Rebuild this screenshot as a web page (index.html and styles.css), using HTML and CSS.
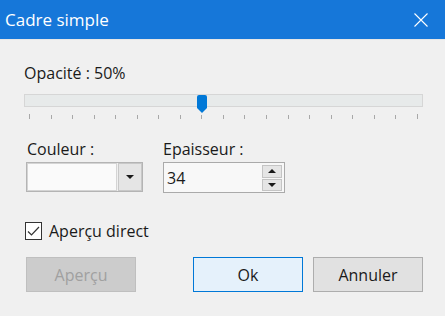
FILE: index.html
```html
<!DOCTYPE html>
<html lang="fr">
<head>
    <meta charset="UTF-8">
    <title>Cadre simple</title>
    <link rel="stylesheet" href="styles.css">
</head>
<body>

    <div class="window">
        <div class="titlebar">
            <span class="title">Cadre simple</span>
            <svg class="close" width="14" height="14" viewBox="0 0 14 14">
                <path d="M0.5 0.5 L13.5 13.5 M13.5 0.5 L0.5 13.5" stroke="#fff" stroke-width="1.1" fill="none"/>
            </svg>
        </div>

        <div class="content">
            <div class="label">Opacité : 50%</div>
            <div class="slider">
                <div class="track"></div>
                <div class="thumb"></div>
                <div class="ticks">
                    <span class="tick long"></span>
                    <span class="tick"></span><span class="tick"></span><span class="tick"></span>
                    <span class="tick"></span><span class="tick"></span><span class="tick"></span>
                    <span class="tick"></span><span class="tick"></span><span class="tick"></span>
                    <span class="tick"></span><span class="tick"></span><span class="tick"></span>
                    <span class="tick"></span><span class="tick"></span><span class="tick"></span>
                    <span class="tick"></span><span class="tick"></span>
                    <span class="tick long"></span>
                </div>
            </div>

            <div class="fields">
                <div class="field">
                    <div class="label">Couleur :</div>
                    <div class="combo">
                        <div class="combo-value"></div>
                        <div class="combo-btn"><span class="arrow-down"></span></div>
                    </div>
                </div>
                <div class="field">
                    <div class="label">Epaisseur :</div>
                    <div class="spin">
                        <div class="spin-value">34</div>
                        <div class="spin-btns">
                            <div class="spin-btn"><span class="arrow-up"></span></div>
                            <div class="spin-btn"><span class="arrow-down"></span></div>
                        </div>
                    </div>
                </div>
            </div>

            <label class="check">
                <span class="box">
                    <svg width="15" height="15" viewBox="0 0 15 15">
                        <path d="M2 7.5 L5.5 11 L13 3" stroke="#333" stroke-width="1.2" fill="none"/>
                    </svg>
                </span>
                Aperçu direct
            </label>

            <div class="buttons">
                <button class="btn disabled">Aperçu</button>
                <div class="spacer"></div>
                <button class="btn default">Ok</button>
                <button class="btn">Annuler</button>
            </div>
        </div>
    </div>

</body>
</html>
```

FILE: styles.css
```css
body {
    margin: 0;
    padding: 0;
    background-color: #f0f0f0;
    font-family: "Open Sans", Arial, sans-serif;
    color: #1a1a1a;
}
.window {
    width: 445px;
    height: 316px;
    background-color: #f0f0f0;
}
.titlebar {
    height: 39px;
    background-color: #1677d9;
    display: flex;
    align-items: center;
    justify-content: space-between;
    padding: 0 17px 0 5px;
    border-bottom: 1px solid #e6e6e6;
}
.title {
    color: #fff;
    font-size: 17px;
    margin-top: -1px;
}
.close {
    display: block;
    margin-top: 1px;
}
.content {
    padding: 23px 22px 0 24px;
}
.label {
    font-size: 16px;
    line-height: 20px;
}
.slider {
    position: relative;
    margin-top: 11px;
    height: 30px;
}
.track {
    background-color: #e7eaea;
    border: 1px solid #d6d6d6;
    box-sizing: border-box;
    height: 13px;
    margin-top: 3px;
}
.thumb {
    position: absolute;
    left: 173px;
    top: 1px;
    width: 10px;
    height: 18px;
    background-color: #0078d7;
    clip-path: polygon(0 0, 100% 0, 100% 72%, 50% 100%, 0 72%);
    border-radius: 2px 2px 0 0;
}
.ticks {
    display: flex;
    justify-content: space-between;
    margin: 7px 5px 0 5px;
    align-items: flex-start;
}
.tick {
    width: 1px;
    height: 4px;
    margin-top: 1px;
    background-color: #a8a8a8;
}
.tick.long {
    height: 5px;
    margin-top: 0;
}
.fields {
    display: flex;
    gap: 20px;
    margin-top: 15px;
}
.field .label {
    padding-left: 3px;
    margin-bottom: 3px;
}
.field:last-child .label {
    padding-left: 0;
}
.combo {
    display: flex;
    width: 117px;
    height: 30px;
    border: 1px solid #b4b4b4;
    box-sizing: border-box;
    margin-left: 2px;
}
.combo-value {
    flex: 1;
    background-color: #fafafa;
    border: 1px solid #d4d4d4;
    margin-right: 1px;
}
.combo-btn {
    width: 22px;
    background-color: #e5e5e5;
    border: 1px solid #c8c8c8;
    display: flex;
    align-items: center;
    justify-content: center;
}
.arrow-down, .arrow-up {
    width: 0;
    height: 0;
    border-left: 4px solid transparent;
    border-right: 4px solid transparent;
}
.arrow-down {
    border-top: 4px solid #1a1a1a;
}
.arrow-up {
    border-bottom: 4px solid #1a1a1a;
}
.spin {
    display: flex;
    width: 122px;
    height: 31px;
    border: 1px solid #aaaaaa;
    box-sizing: border-box;
    background-color: #f8f8f8;
}
.spin-value {
    flex: 1;
    font-size: 16px;
    line-height: 20px;
    padding: 5px 0 0 3px;
}
.spin-btns {
    display: flex;
    flex-direction: column;
    gap: 1px;
    padding: 2px 2px 1px 0;
}
.spin-btn {
    width: 18px;
    flex: 1;
    background-color: #e5e5e5;
    border: 1px solid #c4c4c4;
    display: flex;
    align-items: center;
    justify-content: center;
}
.check {
    display: flex;
    align-items: center;
    gap: 7px;
    margin-top: 28px;
    font-size: 16px;
    line-height: 20px;
    margin-left: 1px;
}
.box {
    width: 17px;
    height: 18px;
    border: 1px solid #333;
    background-color: #fff;
    box-sizing: border-box;
    display: flex;
    align-items: center;
    justify-content: center;
}
.buttons {
    display: flex;
    gap: 10px;
    margin-top: 16px;
    padding-left: 2px;
}
.spacer {
    flex: 1;
}
.btn {
    width: 110px;
    height: 35px;
    font-family: "Open Sans", Arial, sans-serif;
    font-size: 16px;
    color: #1a1a1a;
    background-color: #e1e1e1;
    border: 1px solid #adadad;
    padding: 0;
}
.btn.default {
    background-color: #e5f1fb;
    border-color: #0078d7;
}
.btn.disabled {
    background-color: #cccccc;
    border-color: #bfbfbf;
    color: #a0a0a0;
}
```
